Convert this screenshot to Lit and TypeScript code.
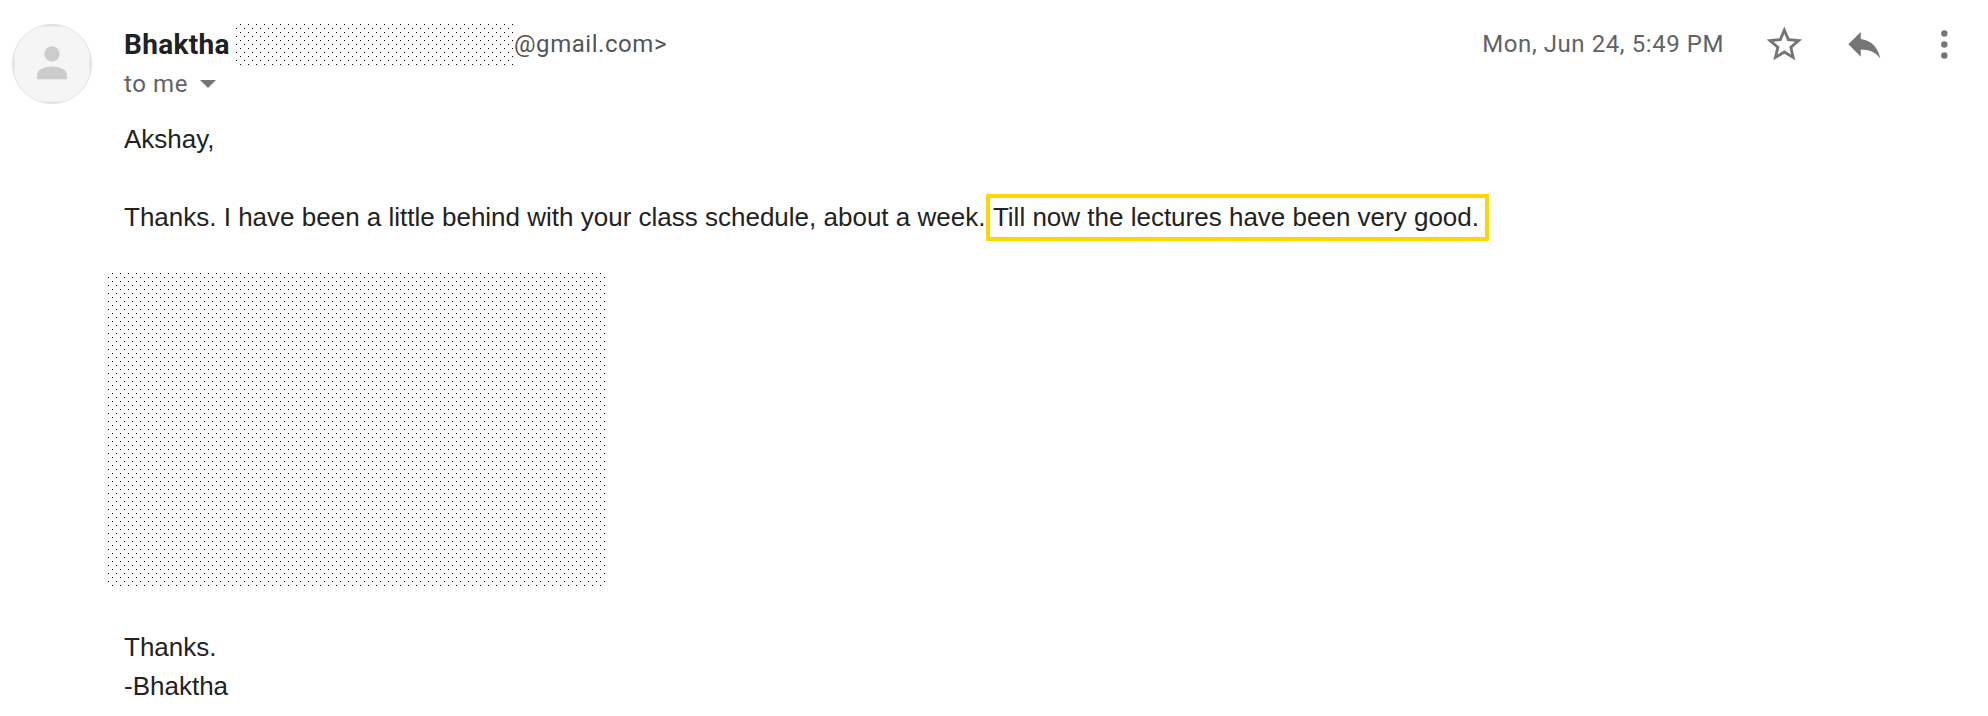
import { LitElement, html, css } from "lit";
import { customElement } from "lit/decorators.js";

@customElement("app-root")
export class AppRoot extends LitElement {
  static styles = css`
    :host { display: block; width: 1988px; height: 716px; background: #fff; overflow: hidden; }
    * { box-sizing: border-box; }
    .mail { display: grid; grid-template-columns: 124px 1fr; height: 716px; }
    .avatar { display: block; margin: 24px 0 0 12px; }
    .main { display: flex; flex-direction: column; align-items: flex-start; padding-top: 24px; }
    .head { display: flex; width: 100%; height: 41px; align-items: flex-start; font-family: Roboto, sans-serif; color: #5f6368; white-space: nowrap; }
    .name { width: 112px; font-size: 28px; line-height: 41px; font-weight: 700; letter-spacing: 0.3px; color: #202124; }
    .address { font-size: 24px; line-height: 40px; letter-spacing: 0.55px; margin-left: 1px; color: #555; }
    .date { margin-left: auto; font-size: 24px; line-height: 40px; letter-spacing: 0.58px; }
    .redacted-address, .redacted-body { display: block; flex: none; }
    .redacted-body { margin: 32px 0 0 -16px; }
    .actions { display: flex; gap: 37.33px; margin: -1.2px 22.7px 0 38.6px; }
    .actions svg { width: 42.67px; height: 42.67px; fill: #757575; display: block; }
    .to { display: flex; align-items: center; height: 38px; font: 24px/38px Roboto, sans-serif; letter-spacing: 0.6px; color: #5f6368; }
    .to svg { margin-left: 12px; }
    .body { font: 26px/39px "Liberation Sans", Arial, sans-serif; color: #222; white-space: nowrap; }
    .first { margin-top: 17px; }
    .line { display: flex; margin-top: 35px; height: 47px; align-items: center; }
    .mark { height: 47px; border: 4px solid #ffd600; line-height: 38px; padding: 0 5.5px 0 2.5px; margin-left: 1px; }
    .sign { margin-top: 42px; }
  `;

  private dots(cls: string, w: number, h: number, id: string) {
    return html`<svg class=${cls} width=${w} height=${h} shape-rendering="crispEdges" aria-hidden="true">
      <defs><pattern id=${id} width="8" height="8" patternUnits="userSpaceOnUse">
        <rect x="4" y="0" width="1" height="1"></rect><rect x="0" y="4" width="1" height="1"></rect>
      </pattern></defs>
      <rect width=${w} height=${h} fill="url(#${id})"></rect>
    </svg>`;
  }

  render() {
    return html`<article class="mail">
      <svg class="avatar" width="80" height="80" viewBox="0 0 80 80">
        <defs><clipPath id="round"><circle cx="40" cy="40" r="40"></circle></clipPath></defs>
        <g clip-path="url(#round)">
          <rect width="80" height="80" fill="#e0e0e0"></rect>
          <rect x="2.5" y="2.5" width="75" height="75" fill="#f5f5f5"></rect>
        </g>
        <circle cx="40" cy="40" r="39.5" fill="none" stroke="#e6e6e6"></circle>
        <circle cx="40" cy="29.9" r="7.6" fill="#ccc"></circle>
        <path d="M25 55.3v-4.5c0-5.2 8.5-8.2 15-8.2s15 3 15 8.2v4.5z" fill="#ccc"></path>
      </svg>
      <div class="main">
        <header class="head">
          <span class="name">Bhaktha</span>
          ${this.dots("redacted-address", 277, 41, "address-dots")}
          <span class="address">@gmail.com&gt;</span>
          <span class="date">Mon, Jun 24, 5:49 PM</span>
          <div class="actions">
            <svg viewBox="0 0 24 24"><path d="M22 9.24l-7.19-.62L12 2 9.19 8.63 2 9.24l5.46 4.73L5.82 21 12 17.27 18.18 21l-1.63-7.03L22 9.24zM12 15.4l-3.76 2.27 1-4.28-3.32-2.88 4.38-.38L12 6.1l1.71 4.04 4.38.38-3.32 2.88 1 4.28L12 15.4z"></path></svg>
            <svg viewBox="0 0 24 24"><path d="M10 9V5l-7 7 7 7v-4.1c5 0 8.5 1.6 11 5.1-1-5-4-10-11-11z"></path></svg>
            <svg viewBox="0 0 24 24"><circle cx="12" cy="5.9" r="1.8"></circle><circle cx="12" cy="12.1" r="1.8"></circle><circle cx="12" cy="18.3" r="1.8"></circle></svg>
          </div>
        </header>
        <div class="to">to me<svg width="16" height="8" viewBox="0 0 16 8"><path d="M0 0h16L8 8z" fill="#757575"></path></svg></div>
        <div class="body first">Akshay,</div>
        <div class="body line"><span>Thanks. I have been a little behind with your class schedule, about a week.</span><span class="mark">Till now the lectures have been very good.</span></div>
        ${this.dots("redacted-body", 497, 313, "body-dots")}
        <div class="body sign">Thanks.<br>-Bhaktha</div>
      </div>
    </article>`;
  }
}
